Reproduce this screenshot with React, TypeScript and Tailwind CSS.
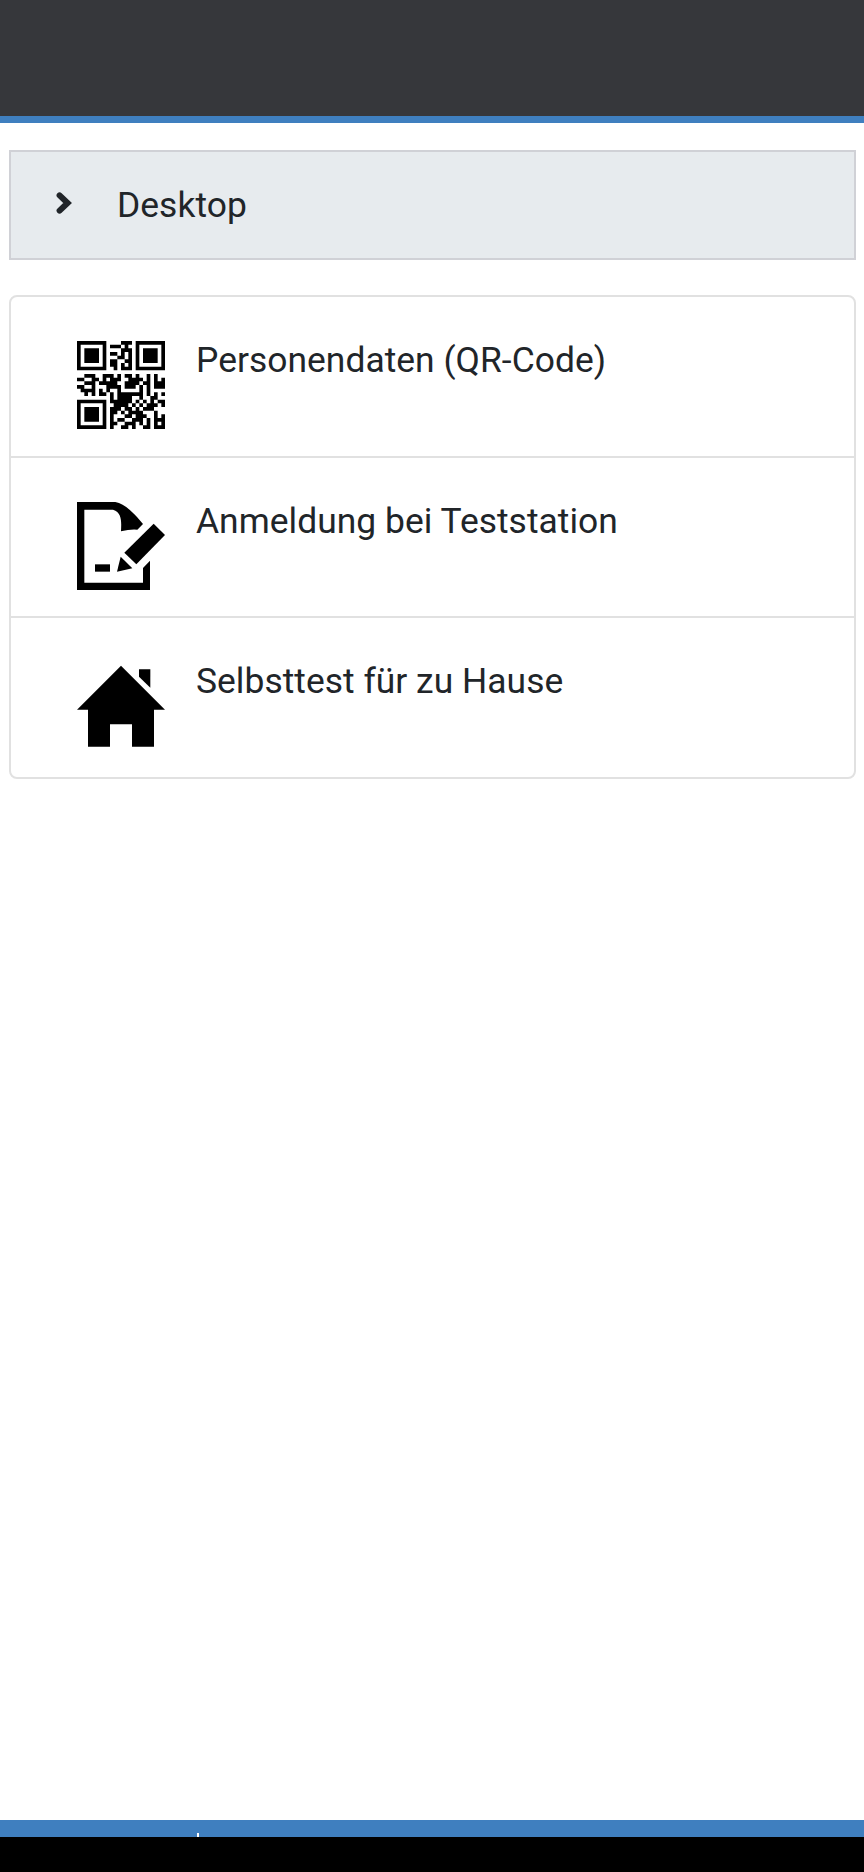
import React from 'react';

// 24 x 24 modules, '#' is a dark one
const qrRows = [
  '########....###.########',
  '#......#.###.#..#......#',
  '#.####.#....###.#.####.#',
  '#.####.#.##.#.#.#.####.#',
  '#.####.#...##.#.#.####.#',
  '#.####.#.##..##.#.####.#',
  '#......#.##.#.#.#......#',
  '########..#.###.########',
  '........................',
  '..###..###.#.##.#..#.#..',
  '##..##.#.###..####.#.#.#',
  '..###.#####..####.##.###',
  '##..#...####.###.#.#.###',
  '.####.#.#..#.....#.#....',
  '..#.#.##.#.#######.#.#.#',
  '.........#.####..#..##..',
  '########.######.#.#.#.##',
  '#......#..####.#.#.###.#',
  '#.####.#.###.##.#.###...',
  '#.####.#.##.#.####...#..',
  '#.####.#.#...##.###..#.#',
  '#.####.#.#.##..###.#.###',
  '#......#.##..###.#.#.#.#',
  '########.#..##.#..##.###',
];

// One path for all modules, so that neighbours join without seams
const qrPath = qrRows
  .map((row, y) => row.replace(/\./g, ' ').split('').map((cell, x) => (cell === '#' ? `M${x} ${y}h1v1h-1z` : '')).join(''))
  .join('');

const QrIcon: React.FC = () => (
  <svg viewBox="0 0 24 24" className="h-22 w-22">
    <path d={qrPath} />
  </svg>
);

const FormIcon: React.FC = () => (
  <svg viewBox="0 0 264 264" className="h-22 w-22">
    <path
      fillRule="evenodd"
      d="M0 0H115C137 3 159 23 180 45L198 66L181 83Q160 81 132 88C133 62 136 31 108 23H22V242H198V198L219 176V264H0Z"
    />
    <path d="M230 65L264 99L178 187L142 152Z" />
    <path d="M131 164L166 199L120 209Z" />
    <path d="M54 187H99V209H54Z" />
  </svg>
);

const HomeIcon: React.FC = () => (
  <svg viewBox="0 0 264 264" className="h-22 w-22">
    <path d="M132 11L264 143H231V254H165V187H99V254H33V143H0Z" />
    <path d="M186 22H220V77L186 44Z" />
  </svg>
);

const menuItems = [
  { label: 'Personendaten (QR-Code)', icon: <QrIcon /> },
  { label: 'Anmeldung bei Teststation', icon: <FormIcon /> },
  { label: 'Selbsttest für zu Hause', icon: <HomeIcon /> },
];

const App: React.FC = () => {
  return (
    <div className="flex h-[1872px] w-full flex-col bg-white font-[Roboto,sans-serif] text-[#212529]">
      <header className="h-[123px] shrink-0 border-b-7 border-[#3f7fbf] bg-[#36373b]" />

      <main className="flex-1 pt-[27px] pr-[8px] pl-[9px]">
        <div className="flex h-[110px] items-center border-2 border-[#d0d1d6] bg-[#e7ebee] pl-[45px]">
          <svg viewBox="0 0 16 22" className="mb-[4px] h-[22px] w-[16px]" fill="none">
            <path
              d="M3.6 3.4L11.6 11L3.6 18.6"
              stroke="currentColor"
              strokeWidth="6"
              strokeLinecap="round"
            />
          </svg>
          <h1 className="ml-[45px] text-[35.4px] leading-[52px] tracking-[0.05px]">Desktop</h1>
        </div>

        <ul className="mt-[35px] rounded-lg border-2 border-[#e1e1e1]">
          {menuItems.map((item) => (
            <li
              key={item.label}
              className="flex h-[160.5px] items-start border-b-2 border-[#e1e1e1] pt-[44px] pl-[66px] last:h-[159px] last:border-b-0"
            >
              {item.icon}
              <span className="-mt-[7px] ml-[31px] text-[35.4px] leading-[52px] tracking-[0.03px]">
                {item.label}
              </span>
            </li>
          ))}
        </ul>
      </main>

      <footer className="h-[17px] shrink-0 bg-[#3f7fbf] pt-[13px] pl-[197px]">
        <div className="h-[4px] w-[2px] bg-white" />
      </footer>
      <div className="h-[35px] shrink-0 bg-black" />
    </div>
  );
};

export default App;
